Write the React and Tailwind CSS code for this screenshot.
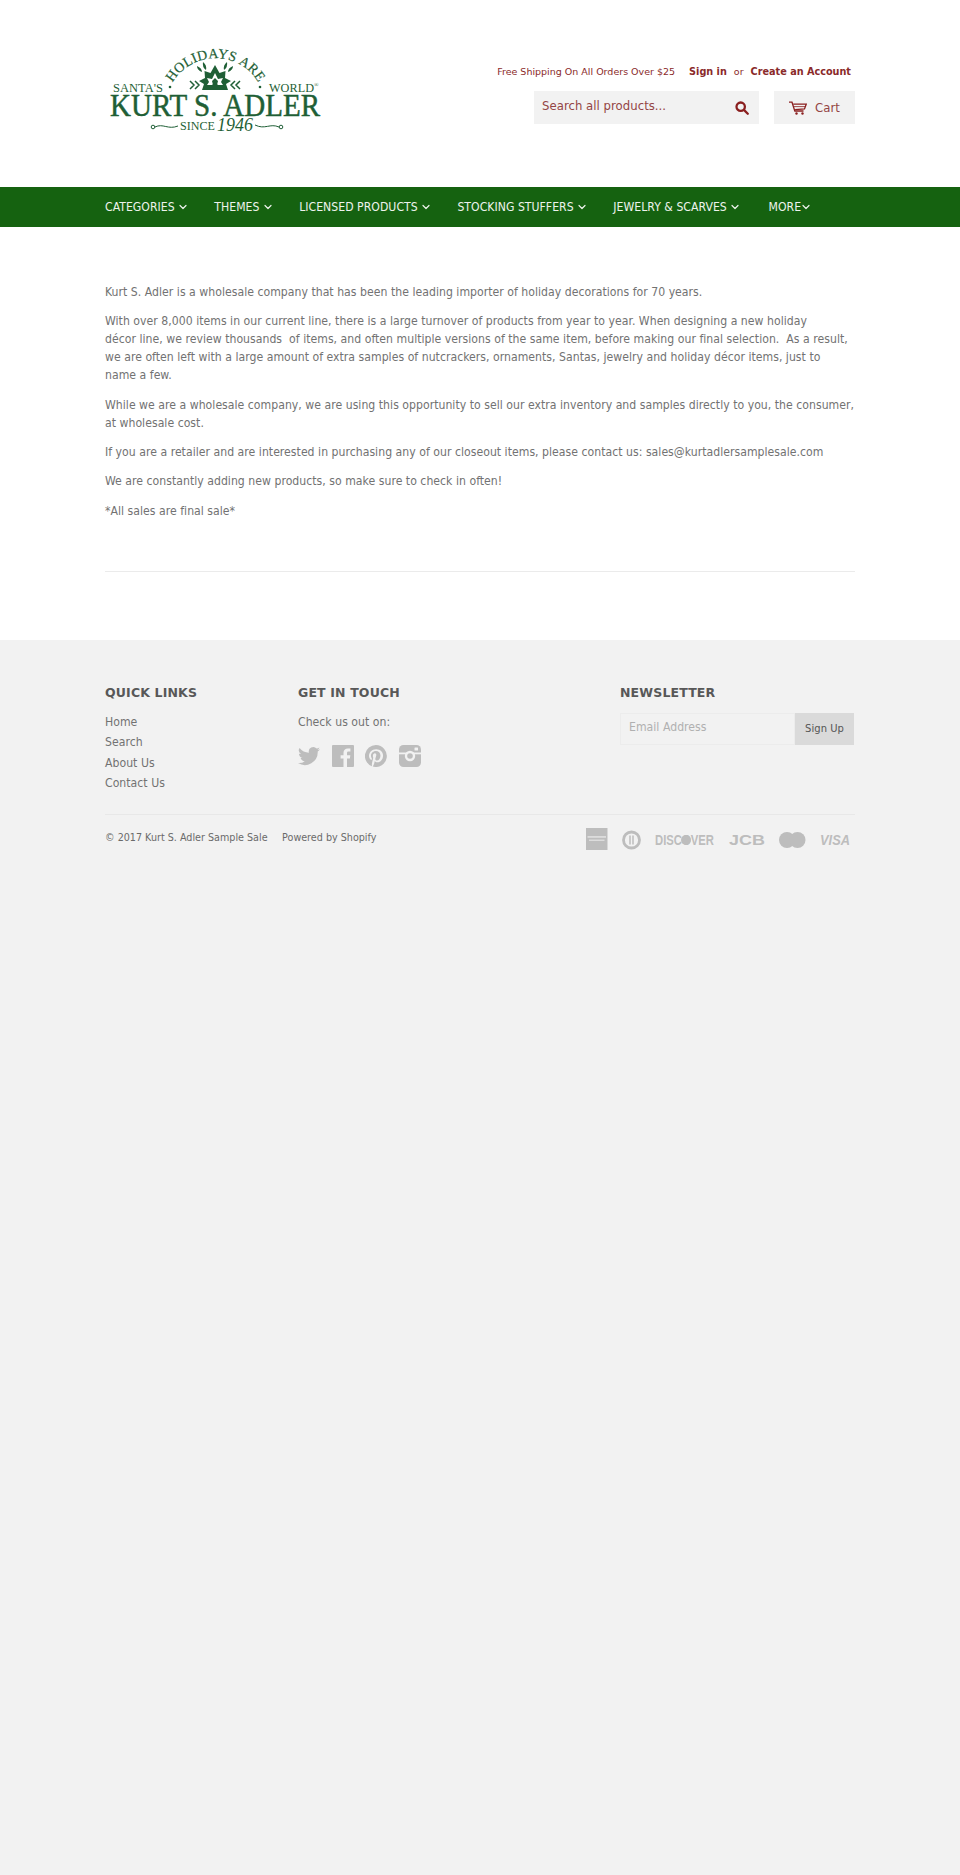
import React from 'react';
import { ChevronDown } from 'lucide-react';

const navItems = ['CATEGORIES', 'THEMES', 'LICENSED PRODUCTS', 'STOCKING STUFFERS', 'JEWELRY & SCARVES'];
const quickLinks = ['Home', 'Search', 'About Us', 'Contact Us'];

const Logo = () => (
    <svg width="225" height="100" viewBox="0 0 225 100" className="block" fill="#1f5f36" fontFamily="'Liberation Serif', serif">
        <defs>
            <path id="logoArc" d="M 62 56 A 50 50 0 0 1 159 56" fill="none" />
        </defs>
        <text fontSize="14" letterSpacing="0.2" textAnchor="middle" stroke="#1f5f36" strokeWidth="0.2"><textPath href="#logoArc" startOffset="50%">HOLIDAYS ARE</textPath></text>
        {/* emblem */}
        <path fillRule="evenodd" d="M110 25 l4.500 8 6-2 -.5 7 6 3 -5 3 2 6 -26 0 2-6 -5-3 6-3 -.5-7 6 2z M110 33 l-3 6 -5 -1 2 4 -2 3 5 0 3-3 3 3 5 0 -2-3 2-4 -5 1z" />
        <path d="M110 38 l3 3 -1 4 -2-1.500 -2 1.500 -1-4z" />
        <path d="M98 22 q-1 5 3 8 q1-5-3-8z M92 26 q0 4 5 6 q0-4-5-6z M122 22 q1 5-3 8 q-1-5 3-8z M128 26 q0 4-5 6 q0-4 5-6z" />
        <path d="M85 41 l4 4 -4 4 M90 41 l4 4 -4 4 M135 41 l-4 4 4 4 M130 41 l-4 4 4 4" fill="none" stroke="#1f5f36" strokeWidth="1.500" />
        <text x="8" y="52" fontSize="13" textLength="50" lengthAdjust="spacingAndGlyphs">SANTA'S</text>
        <text x="164" y="52" fontSize="13" textLength="45" lengthAdjust="spacingAndGlyphs">WORLD</text>
        <text x="209" y="47" fontSize="6">®</text>
        <circle cx="65" cy="47" r="1.300" /><circle cx="155" cy="47" r="1.300" />
        <text x="5" y="76" fontSize="32" textLength="210" lengthAdjust="spacingAndGlyphs" stroke="#1f5f36" strokeWidth="0.500">KURT S. ADLER</text>
        <text x="75" y="90" fontSize="11.500" textLength="35" lengthAdjust="spacingAndGlyphs">SINCE</text>
        <text x="112" y="91" fontSize="18" fontStyle="italic" textLength="36" lengthAdjust="spacingAndGlyphs">1946</text>
        <path d="M50 87 c8-4 13 3 23-1 M150 85 c10 5 15-2 24 2" fill="none" stroke="#1f5f36" strokeWidth="1" />
        <circle cx="48" cy="87" r="1.800" fill="none" stroke="#1f5f36" /><circle cx="176" cy="87" r="1.800" fill="none" stroke="#1f5f36" />
    </svg>
);

const SearchIcon = () => (
    <svg width="14" height="14" viewBox="0 0 16 16" fill="none" stroke="#8a1f1f" strokeWidth="2.600" strokeLinecap="round">
        <circle cx="6.500" cy="6.500" r="4.800" />
        <path d="M10.200 10.200l4.400 4.400" />
    </svg>
);

const CartIcon = () => (
    <svg width="18" height="14" viewBox="0 0 18 14" fill="none" stroke="#8a1f1f" strokeWidth="1.300">
        <path d="M0 1.200h3l2.800 8.800h8.700" />
        <path d="M4.200 3.200h13l-1.700 4.800-9.400 .6" />
        <path d="M5 5.600h11" strokeWidth="0.800" />
        <circle cx="7.500" cy="12.500" r="1.200" fill="#8a1f1f" stroke="none" />
        <circle cx="13.500" cy="12.500" r="1.200" fill="#8a1f1f" stroke="none" />
    </svg>
);

const Twitter = () => (
    <svg width="22" height="22" viewBox="0 0 24 24" fill="#bdbdbd">
        <path d="M24 4.600a9.800 9.800 0 0 1-2.800.8 4.900 4.900 0 0 0 2.200-2.700 9.800 9.800 0 0 1-3.100 1.200 4.900 4.900 0 0 0-8.400 4.500A14 14 0 0 1 1.700 3.200a4.900 4.900 0 0 0 1.500 6.600 4.900 4.900 0 0 1-2.200-.6c0 2.400 1.700 4.400 4 4.900a4.900 4.900 0 0 1-2.200.1 4.900 4.900 0 0 0 4.600 3.400A9.900 9.900 0 0 1 0 19.600a14 14 0 0 0 21.500-12.400A10 10 0 0 0 24 4.600z" />
    </svg>
);

const Facebook = () => (
    <svg width="22" height="22" viewBox="0 0 22 22" fill="#bdbdbd">
        <path d="M1 0h20a1 1 0 0 1 1 1v20a1 1 0 0 1-1 1h-6v-8.500h2.900l.4-3.300H15V8.100c0-1 .3-1.600 1.600-1.600h1.800V3.500c-.3 0-1.400-.1-2.600-.1-2.600 0-4.300 1.600-4.300 4.400v2.400H8.600v3.300h2.900V22H1a1 1 0 0 1-1-1V1a1 1 0 0 1 1-1z" />
    </svg>
);

const Pinterest = () => (
    <svg width="22" height="22" viewBox="0 0 24 24" fill="#bdbdbd">
        <path d="M12 0a12 12 0 0 0-4.400 23.200c-.1-1-.2-2.400 0-3.400l1.400-6s-.4-.7-.4-1.800c0-1.700 1-2.900 2.200-2.900 1 0 1.500.8 1.500 1.700 0 1-.7 2.600-1 4-.3 1.200.6 2.200 1.800 2.200 2.100 0 3.800-2.300 3.800-5.500 0-2.900-2.100-4.900-5-4.900-3.400 0-5.400 2.600-5.400 5.200 0 1 .4 2.100.9 2.700.1.100.1.200.1.300l-.3 1.400c-.1.200-.2.300-.4.200-1.500-.7-2.400-2.900-2.400-4.600 0-3.800 2.800-7.300 7.900-7.300 4.200 0 7.400 3 7.400 6.900 0 4.100-2.600 7.500-6.200 7.500-1.200 0-2.400-.6-2.800-1.400l-.8 2.900c-.3 1-1 2.300-1.500 3.100A12 12 0 1 0 12 0z" />
    </svg>
);

const Instagram = () => (
    <svg width="22" height="22" viewBox="0 0 22 22" fill="#bdbdbd">
        <rect width="22" height="22" rx="4.500" />
        <rect y="7.500" width="22" height="1.800" fill="#f2f2f2" />
        <circle cx="11" cy="11" r="5.200" fill="#f2f2f2" />
        <circle cx="11" cy="11" r="2.800" />
        <rect x="15.500" y="2.500" width="3.500" height="3" rx="0.500" fill="#f2f2f2" />
    </svg>
);

const Payments = () => (
    <svg width="269" height="24" viewBox="0 0 269 24" fill="#bdbdbd" fontFamily="'Liberation Sans', sans-serif" fontWeight="700">
        <rect x="0" y="0" width="21.500" height="22" />
        <rect x="1.500" y="8" width="18.500" height="1.800" fill="#dcdcdc" />
        <rect x="3" y="11.500" width="15.500" height="1.500" fill="#dcdcdc" />
        <circle cx="45.500" cy="12" r="8" fill="none" stroke="#bdbdbd" strokeWidth="2.800" />
        <path d="M44 7.500v9M47 7.500v9" stroke="#bdbdbd" strokeWidth="1.500" />
        <text x="69" y="17" fontSize="14" textLength="59" lengthAdjust="spacingAndGlyphs">DISCOVER</text>
        <circle cx="100" cy="12" r="5" />
        <text x="143" y="17" fontSize="14" textLength="36" lengthAdjust="spacingAndGlyphs">JCB</text>
        <circle cx="201" cy="12" r="8" />
        <circle cx="211.500" cy="12" r="8" />
        <text x="234" y="17" fontSize="14" fontStyle="italic" textLength="30" lengthAdjust="spacingAndGlyphs">VISA</text>
    </svg>
);

export default function App() {
    return (
        <div className="min-h-[1875px] bg-white font-['DejaVu_Sans_Condensed','DejaVu_Sans',sans-serif] text-[#727272] text-[12.140px] tracking-[0.03px]">
            <header className="mx-auto w-[750px] h-[187px] flex justify-between">
                <div className="pt-[40px]"><Logo /></div>
                <div className="pt-[64px] flex flex-col items-end">
                    <div className="font-['DejaVu_Sans',sans-serif] tracking-normal text-[9.500px] text-[#8a2a2a] pr-[4px] h-[16px] flex items-center">
                        <span className="mr-[14px]">Free Shipping On All Orders Over $25</span>
                        <span className="font-bold text-[9.700px]">Sign in</span>
                        <span className="mx-[7px]">or</span>
                        <span className="font-bold text-[9.700px]">Create an Account</span>
                    </div>
                    <div className="flex mt-[11px] gap-[15px]">
                        <div className="w-[225px] h-[33px] bg-[#f2f2f2] flex items-center justify-between pl-[8px] pr-[10px] text-[13px] text-[#944545]">
                            <span className="pb-[3px]">Search all products...</span>
                            <SearchIcon />
                        </div>
                        <div className="w-[81px] h-[33px] bg-[#f2f2f2] flex items-center justify-center gap-[8px] text-[13px] text-[#944545]">
                            <CartIcon />
                            <span>Cart</span>
                        </div>
                    </div>
                </div>
            </header>

            <nav className="bg-[#156210] h-[40px]">
                <div className="mx-auto w-[750px] h-full flex items-center gap-[25.700px] text-[#eef3ed] whitespace-nowrap">
                    {navItems.map((item) => (
                        <span key={item} className="flex items-center">
                            {item}
                            <ChevronDown size={12} strokeWidth={2.400} className="ml-[2px]" />
                        </span>
                    ))}
                    <span className="flex items-center ml-[2px]">MORE<ChevronDown size={12} strokeWidth={2.400} className="-ml-[1px]" /></span>
                </div>
            </nav>

            <main className="mx-auto w-[750px] pt-[56px] h-[413px]">
                <div className="flex flex-col gap-[11.330px] leading-[18px]">
                    <p>Kurt S. Adler is a wholesale company that has been the leading importer of holiday decorations for 70 years.</p>
                    <p>With over 8,000 items in our current line, there is a large turnover of products from year to year. When designing a new holiday<br />décor line, we review thousands&nbsp; of items, and often multiple versions of the same item, before making our final selection.&nbsp; As a result, we are often left with a large amount of extra samples of nutcrackers, ornaments, Santas, jewelry and holiday décor items, just to<br />name a few.</p>
                    <p>While we are a wholesale company, we are using this opportunity to sell our extra inventory and samples directly to you, the consumer, at wholesale cost.</p>
                    <p>If you are a retailer and are interested in purchasing any of our closeout items, please contact us: sales@kurtadlersamplesale.com</p>
                    <p>We are constantly adding new products, so make sure to check in often!</p>
                    <p>*All sales are final sale*</p>
                </div>
                <hr className="mt-[51px] border-t border-[#ebebeb]" />
            </main>

            <footer className="bg-[#f2f2f2] min-h-[1235px]">
                <div className="mx-auto w-[750px] pt-[44px]">
                    <div className="flex h-[130px]">
                        <div className="w-[193px]">
                            <h4 className="font-['DejaVu_Sans',sans-serif] text-[12.500px] tracking-[0.15px] text-[#585858] font-bold leading-[18px]">QUICK LINKS</h4>
                            <ul className="mt-[10px] leading-[20.330px]">
                                {quickLinks.map((link) => <li key={link}>{link}</li>)}
                            </ul>
                        </div>
                        <div className="w-[322px]">
                            <h4 className="font-['DejaVu_Sans',sans-serif] text-[12.500px] tracking-[0.15px] text-[#585858] font-bold leading-[18px]">GET IN TOUCH</h4>
                            <p className="mt-[10px] leading-[20.330px]">Check us out on:</p>
                            <div className="mt-[12.500px] flex gap-[11.500px]">
                                <Twitter />
                                <Facebook />
                                <Pinterest />
                                <Instagram />
                            </div>
                        </div>
                        <div className="flex-1">
                            <h4 className="font-['DejaVu_Sans',sans-serif] text-[12.500px] tracking-[0.15px] text-[#585858] font-bold leading-[18px]">NEWSLETTER</h4>
                            <div className="mt-[11px] flex h-[32px] w-[234px]">
                                <div className="flex-1 border border-[#ececec] pl-[8px] flex items-center text-[#b0b0b0] pb-[3px]">Email Address</div>
                                <div className="w-[59px] bg-[#dadada] flex items-center justify-center text-[11.100px] text-[#555555]">Sign Up</div>
                            </div>
                        </div>
                    </div>
                    <div className="border-t border-[#e8e8e8] pt-[13px] flex justify-between items-start">
                        <div className="font-['DejaVu_Sans',sans-serif] tracking-normal text-[9.600px] text-[#6a6a6a] flex gap-[14.500px] mt-[3px]">
                            <span>© 2017 Kurt S. Adler Sample Sale</span>
                            <span>Powered by Shopify</span>
                        </div>
                        <Payments />
                    </div>
                </div>
            </footer>
        </div>
    );
}
